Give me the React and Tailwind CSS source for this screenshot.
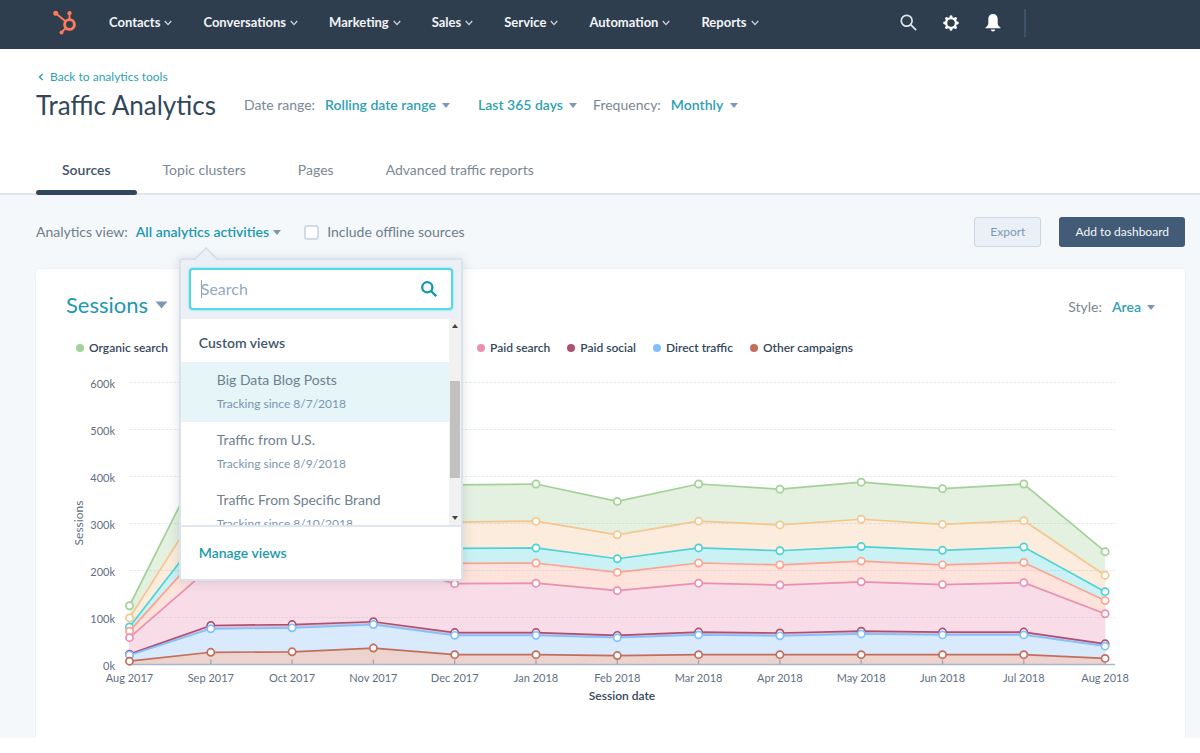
import React from "react";

const NAV = ["Contacts", "Conversations", "Marketing", "Sales", "Service", "Automation", "Reports"];
const TABS = ["Sources", "Topic clusters", "Pages", "Advanced traffic reports"];
const VIEWS = [
  { name: "Big Data Blog Posts", since: "Tracking since 8/7/2018", active: true },
  { name: "Traffic from U.S.", since: "Tracking since 8/9/2018" },
  { name: "Traffic From Specific Brand", since: "Tracking since 8/10/2018" },
];

const MONTHS = [
  "Aug 2017", "Sep 2017", "Oct 2017", "Nov 2017", "Dec 2017", "Jan 2018", "Feb 2018",
  "Mar 2018", "Apr 2018", "May 2018", "Jun 2018", "Jul 2018", "Aug 2018",
];

// Stacked totals in thousands of sessions, top band first.
const SERIES = [
  { line: "#a2d297", fill: "#e4f0e0", values: [125, 470, 475, 480, 382, 384, 347, 384, 373, 388, 374, 384, 240] },
  { line: "#f5c78e", fill: "#fbecdd", values: [99, 371, 374, 378, 303, 305, 276, 305, 297, 309, 298, 306, 190] },
  { line: "#4fd2d6", fill: "#caf2f4", values: [80, 303, 308, 312, 247, 248, 225, 248, 242, 251, 243, 250, 155] },
  { line: "#ffa28f", fill: "#fee2dc", values: [71, 263, 268, 272, 215, 216, 196, 216, 212, 220, 212, 217, 136] },
  { line: "#ea90b1", fill: "#f8dde8", values: [57, 207, 212, 218, 172, 173, 157, 173, 169, 176, 170, 174, 108] },
  { line: "#ad5074", fill: "#dcc0d2", values: [22, 83, 85, 91, 68, 68, 62, 69, 67, 71, 69, 69, 44] },
  { line: "#81c1fd", fill: "#d9eafd", values: [20, 76, 78, 85, 62, 62, 57, 63, 61, 65, 63, 63, 39] },
  { line: "#c36e5c", fill: "#ecd3ce", values: [7, 26, 27, 35, 21, 21, 19, 21, 21, 21, 21, 21, 13] },
];

const BASE = 299.5;
const px = (i) => 93.5 + i * 81.3;
const py = (v) => BASE - v * 0.47;

function NavChevron() {
  return (
    <svg width="8" height="6" viewBox="0 0 8 6" fill="none" stroke="#cbd6e2" strokeWidth="1.3" aria-hidden="true">
      <path d="M0.8 1l3.2 3.6L7.2 1" />
    </svg>
  );
}

function Caret({ large }) {
  return large ? (
    <svg width="13" height="8" viewBox="0 0 13 8" fill="#7c98b6" aria-hidden="true"><path d="M0.5 0.5h12L6.5 7.5z" /></svg>
  ) : (
    <svg width="8" height="5" viewBox="0 0 8 5" fill="#7c98b6" aria-hidden="true"><path d="M0 0h8L4 5z" /></svg>
  );
}

function Logo() {
  return (
    <svg width="26" height="26" viewBox="0 0 26 26" fill="none" stroke="#ff7a59" aria-hidden="true">
      <circle cx="17.5" cy="14.5" r="4.9" strokeWidth="2.9" />
      <path d="M17.5 9.5V4M13.5 11.3L4 3.6M13.8 18L9.5 22.3" strokeWidth="1.9" />
      <circle cx="17.5" cy="3.2" r="2.1" fill="#ff7a59" stroke="none" />
      <circle cx="3.7" cy="3.2" r="2.5" fill="#ff7a59" stroke="none" />
      <circle cx="9.5" cy="22.5" r="2" fill="#ff7a59" stroke="none" />
    </svg>
  );
}

function Gear() {
  return (
    <svg width="16" height="16" viewBox="0 0 16 16" fill="none" stroke="#fff" aria-hidden="true">
      <circle cx="8" cy="8" r="4.9" strokeWidth="2.3" />
      <g strokeWidth="2.9" strokeLinecap="round">
        <path d="M8 1.600v.7M8 13.700v.7M1.600 8h.7M13.700 8h.7M3.500 3.500l.4.4M12.100 12.100l.4.4M3.500 12.500l.4-.4M12.100 3.900l.4-.4" />
      </g>
    </svg>
  );
}

function Bell() {
  return (
    <svg width="16" height="18" viewBox="0 0 16 18" fill="#fff" aria-hidden="true">
      <path d="M8 0C5 0 3.3 2 3.3 5v4.6c0 1.6-.9 2.6-2.8 3.8v.9h15v-.9c-1.900-1.200-2.800-2.200-2.800-3.800V5C12.700 2 11 0 8 0z" />
      <path d="M5.900 15.500h4.200c0 1.200-.9 2-2.100 2s-2.100-.8-2.100-2z" />
    </svg>
  );
}

function Magnifier({ size, color, weight }) {
  return (
    <svg width={size} height={size} viewBox="0 0 16 16" fill="none" stroke={color} strokeWidth={weight} aria-hidden="true">
      <circle cx="6.3" cy="6.3" r="5.1" />
      <path d="M10 10l5.2 5.2" />
    </svg>
  );
}

function Picker({ id, label, value, hideLabel }) {
  return (
    <span className="flex items-center">
      {!hideLabel && <label htmlFor={id} className="mr-[10px] text-[#7b8794]">{label}</label>}
      <span className="flex items-center gap-[6px]">
        <select
          id={id}
          aria-label={hideLabel ? label : undefined}
          className="h-7 appearance-none bg-transparent leading-7 font-semibold text-[#2f9fb4] outline-none"
        >
          <option>{value}</option>
        </select>
        <Caret />
      </span>
    </span>
  );
}

function LegendItem({ dot, children }) {
  return (
    <li className="flex items-center gap-[5px]">
      <span className={`size-2 rounded-full ${dot}`} />
      {children}
    </li>
  );
}

function Chart() {
  return (
    <svg viewBox="0 0 1149 373" className="block w-full font-[Lato,sans-serif]" role="img" aria-label="Sessions by month">
      {SERIES.map((s, n) => (
        <polygon
          key={n}
          fill={s.fill}
          points={`${px(0)},${BASE} ${s.values.map((v, i) => `${px(i)},${py(v)}`).join(" ")} ${px(12)},${BASE}`}
        />
      ))}
      {[100, 200, 300, 400, 500, 600].map((v) => (
        <line key={v} x1="93" x2="1079" y1={py(v)} y2={py(v)} stroke="#94a3b8" strokeOpacity="0.2" strokeDasharray="3 1" />
      ))}
      {[0, 100, 200, 300, 400, 500, 600].map((v) => (
        <text key={v} x="79" y={py(v) + 5} textAnchor="end" fontSize="11" fill="#5f6f82">{v}k</text>
      ))}
      <line x1="93" x2="1079" y1={BASE} y2={BASE} stroke="#a9b7cd" strokeWidth="1.5" />
      {MONTHS.map((m, i) => (
        <g key={m}>
          <line x1={px(i)} x2={px(i)} y1={BASE - 5} y2={BASE} stroke="#9fa6b5" strokeWidth="1.3" />
          <text x={px(i)} y="317" textAnchor="middle" fontSize="11" fill="#5f6f82">{m}</text>
        </g>
      ))}
      {SERIES.map((s, n) => (
        <g key={n} stroke={s.line} strokeWidth="1.7">
          <polyline fill="none" points={s.values.map((v, i) => `${px(i)},${py(v)}`).join(" ")} />
          {s.values.map((v, i) => (
            <circle key={i} cx={px(i)} cy={py(v)} r="3.6" fill="#fff" />
          ))}
        </g>
      ))}
      <text transform="translate(47 158) rotate(-90)" textAnchor="middle" fontSize="12" fill="#5f6f82">Sessions</text>
      <text x="586" y="335" textAnchor="middle" fontSize="12" fontWeight="600" fill="#33475b">Session date</text>
    </svg>
  );
}

function ViewMenu() {
  return (
    <div className="absolute top-full left-[43px] z-10 mt-4 w-[284px] rounded-[3px] border-2 border-[#d9e2ed] bg-white text-sm shadow-[0_1px_12px_rgba(45,62,80,0.16)]">
      <svg className="absolute -top-[13px] left-3 h-[13px] w-[26px]" viewBox="0 0 26 13" aria-hidden="true">
        <path d="M1 13L13 1l12 12z" fill="#eaf0f6" />
        <path d="M0 12.500h1.500L13 1l11.500 11.500H26" fill="none" stroke="#d3ddea" strokeWidth="1.500" />
      </svg>
      <div className="bg-[#eaf0f6] px-2 pt-2 pb-[9px]">
        <div className="relative flex h-[42px] items-center rounded-[4px] border-2 border-[#55d9e8] bg-white pr-[14px] pl-[10px] shadow-[0_0_2px_#55d9e8]">
          <span className="absolute top-[10px] left-[10px] h-[18px] w-px bg-[#8fa3b8]" />
          <input aria-label="Search views" placeholder="Search" className="min-w-0 flex-1 bg-transparent text-base outline-none placeholder:text-[#94a9c4]" />
          <Magnifier size={16} color="#1496ae" weight={2.3} />
        </div>
      </div>
      <div className="flex h-[208px] overflow-hidden border-b-2 border-[#dfe6ef]">
        <div className="flex-1">
          <h3 className="flex h-[43px] items-center px-[18px] pt-[5px] font-semibold text-[#42566b]">Custom views</h3>
          <ul>
            {VIEWS.map((v) => (
              <li key={v.name}>
                <button className={`flex h-[60px] w-full flex-col pt-2 pl-9 text-left ${v.active ? "bg-[#e5f5f8]" : ""}`}>
                  <span className="leading-5 text-[#6f7f90]">{v.name}</span>
                  <span className="mt-1 text-xs leading-5 text-[#7c94b0]">{v.since}</span>
                </button>
              </li>
            ))}
          </ul>
        </div>
        <div className="flex w-3 flex-col items-center bg-[#f1f1f1] py-[5px]" aria-hidden="true">
          <svg width="6" height="4" viewBox="0 0 6 4" fill="#444"><path d="M0 4h6L3 0z" /></svg>
          <div className="mt-[53px] h-[97px] w-[10px] bg-[#c1c1c1]" />
          <svg className="mt-auto" width="6" height="4" viewBox="0 0 6 4" fill="#444"><path d="M0 0h6L3 4z" /></svg>
        </div>
      </div>
      <button className="flex h-[52px] w-full items-center px-[18px] font-semibold text-[#2099ae]">Manage views</button>
    </div>
  );
}

export default function App() {
  return (
    <div className="bg-white font-[Lato,sans-serif] text-[#33475b]">
      <nav className="flex h-[49px] items-center bg-[#2f3e4f] pr-[174px] pb-1 pl-[52px]">
        <a href="#home" aria-label="Home"><Logo /></a>
        <ul className="ml-[31px] flex items-center gap-[31px] text-[13px] font-bold text-[#f1f4f7]">
          {NAV.map((n) => (
            <li key={n}>
              <button className="flex items-center gap-1">{n}<NavChevron /></button>
            </li>
          ))}
        </ul>
        <div className="ml-auto flex items-center gap-[26px]">
          <button aria-label="Search"><Magnifier size={17} color="#dfe5eb" weight={1.6} /></button>
          <button aria-label="Settings"><Gear /></button>
          <button aria-label="Notifications"><Bell /></button>
        </div>
        <span className="ml-[23px] h-7 w-[2px] bg-[#3d5168]" />
      </nav>

      <header className="border-b-2 border-[#dfe6ed] px-9 pt-[18px]">
        <a href="#tools" className="flex items-center gap-[6px] pl-[2px] text-xs leading-5 text-[#2f9fb4]">
          <svg width="6" height="8" viewBox="0 0 6 8" fill="none" stroke="#2f9fb4" strokeWidth="1.4" aria-hidden="true"><path d="M4.600 1L1.500 4l3.100 3" /></svg>
          Back to analytics tools
        </a>
        <div className="flex items-center text-sm">
          <h1 className="mr-7 text-[26px] leading-9 font-normal text-[#33475b]">Traffic Analytics</h1>
          <Picker id="range" label="Date range:" value="Rolling date range" />
          <span className="ml-7"><Picker id="span" label="Period" value="Last 365 days" hideLabel /></span>
          <span className="ml-4"><Picker id="frequency" label="Frequency:" value="Monthly" /></span>
        </div>
        <ul className="mt-6 flex text-sm text-[#7b8794]">
          {TABS.map((t, i) => (
            <li key={t} className="relative">
              <a href="#tab" className={`flex h-[46px] items-center px-[26px] ${i === 0 ? "font-semibold text-[#42566b]" : ""}`}>{t}</a>
              {i === 0 && <span className="absolute inset-x-0 -bottom-[2px] h-[5px] rounded-[3px] bg-[#33475b]" />}
            </li>
          ))}
        </ul>
      </header>

      <main className="bg-[#f5f8fa] pr-[15px] pl-9">
        <div className="flex items-center py-[22px] text-sm text-[#6f7d8c]">
          <span className="mr-2">Analytics view:</span>
          <div className="relative">
            <button aria-expanded="true" className="flex items-center gap-1 font-semibold text-[#2099ae]">
              All analytics activities<Caret />
            </button>
            <ViewMenu />
          </div>
          <label className="ml-[23px] flex items-center gap-2">
            <input type="checkbox" className="size-[15px] appearance-none rounded-[3px] border-2 border-[#d0dbe8] bg-white" />
            Include offline sources
          </label>
          <div className="ml-auto flex gap-[18px] text-xs">
            <button className="h-[30px] rounded-[3px] border border-[#cbd6e2] bg-[#eaf0f6] px-[15px] text-[#7c98b6]">Export</button>
            <button className="h-[30px] rounded-[3px] bg-[#425b76] px-4 text-[#f5f8fa]">Add to dashboard</button>
          </div>
        </div>

        <section className="rounded-t-[3px] bg-white pt-5 shadow-[0_0_2px_rgba(45,62,80,0.12)]">
          <div className="flex items-center justify-between px-[30px]">
            <span className="flex items-center gap-[6px]">
              <select aria-label="Metric" className="h-7 appearance-none bg-transparent text-[22px] leading-7 text-[#2099ae] outline-none">
                <option>Sessions</option>
              </select>
              <Caret large />
            </span>
            <span className="pt-1 text-sm"><Picker id="style" label="Style:" value="Area" /></span>
          </div>
          <ul className="flex gap-[17px] pt-[19px] pb-[9px] pl-10 text-xs leading-4 font-semibold text-[#33475b]">
            <li className="w-96">
              <span className="flex items-center gap-[5px]"><span className="size-2 rounded-full bg-[#a2d297]" />Organic search</span>
            </li>
            <LegendItem dot="bg-[#ea90b1]">Paid search</LegendItem>
            <LegendItem dot="bg-[#ad5074]">Paid social</LegendItem>
            <LegendItem dot="bg-[#81c1fd]">Direct traffic</LegendItem>
            <LegendItem dot="bg-[#c36e5c]">Other campaigns</LegendItem>
          </ul>
          <Chart />
        </section>
      </main>
    </div>
  );
}
